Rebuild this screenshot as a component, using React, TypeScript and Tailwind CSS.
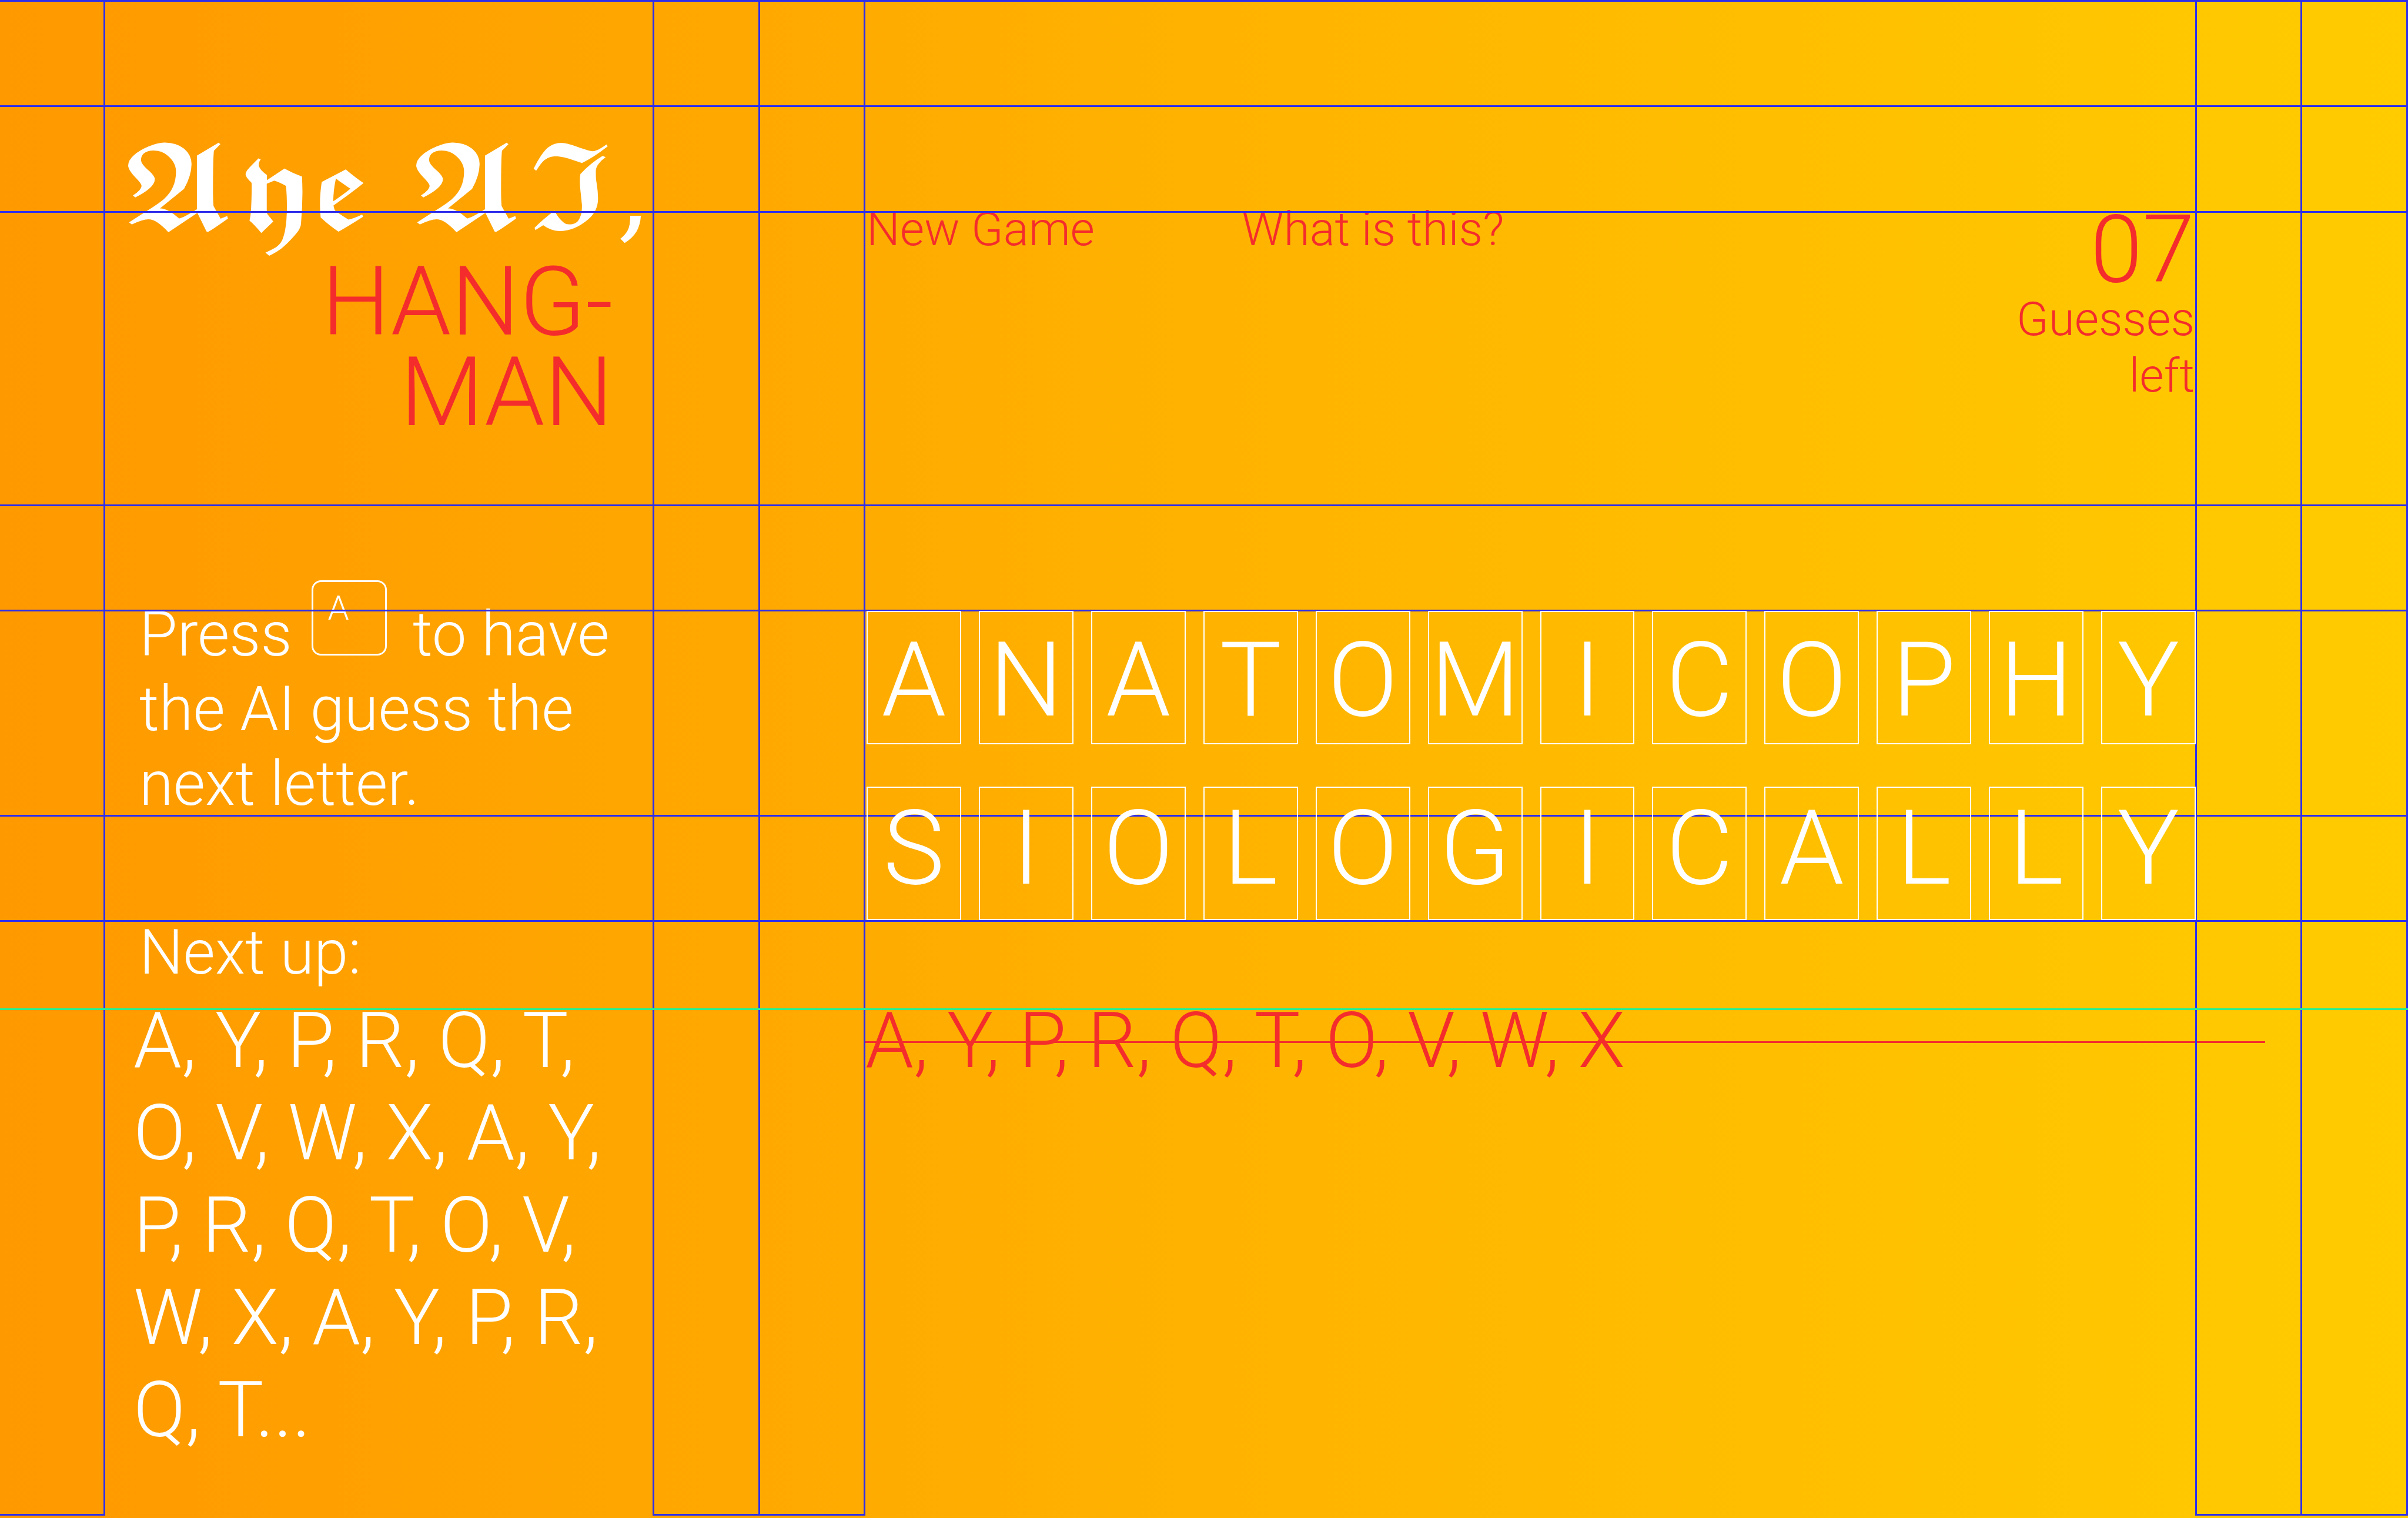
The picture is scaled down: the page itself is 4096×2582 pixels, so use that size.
const WORD_ROWS = ["ANATOMICOPHY", "SIOLOGICALLY"];
const WRONG_GUESSES = "A, Y, P, R, Q, T, O, V, W, X";
const UPCOMING = "A, Y, P, R, Q, T, O, V, W, X, A, Y, P, R, Q, T, O, V, W, X, A, Y, P, R, Q, T...";

function LayoutGuides() {
  return (
    <div aria-hidden="true" className="pointer-events-none absolute inset-0 z-10">
      <div className="absolute inset-x-0 top-0 bottom-1 grid grid-cols-[179fr_934fr_180fr_179fr_2265fr_179fr_180fr] border-t-3 border-[#2e2eea]">
        <div className="border-r-3 border-b-3 border-[#2e2eea]" />
        <div className="border-r-3 border-[#2e2eea]" />
        <div className="border-r-3 border-b-3 border-[#2e2eea]" />
        <div className="border-r-3 border-b-3 border-[#2e2eea]" />
        <div className="border-r-3 border-[#2e2eea]" />
        <div className="border-r-3 border-b-3 border-[#2e2eea]" />
        <div className="border-r-3 border-b-3 border-[#2e2eea]" />
      </div>
      <div className="absolute inset-0 grid grid-rows-[182fr_180fr_499fr_179fr_349fr_179fr_150fr_864fr]">
        <div className="border-b-3 border-[#2e2eea]" />
        <div className="border-b-3 border-[#2e2eea]" />
        <div className="border-b-3 border-[#2e2eea]" />
        <div className="border-b-3 border-[#2e2eea]" />
        <div className="border-b-3 border-[#2e2eea]" />
        <div className="border-b-3 border-[#2e2eea]" />
        <div className="border-b-3 border-[#2dee8c]" />
      </div>
    </div>
  );
}

function Sidebar() {
  return (
    <aside className="col-start-2 pt-[230px] pr-[70px] pl-12 text-white">
      <h1>
        <span
          aria-label="Aye AI,"
          className="-ml-6 block font-['DejaVu_Math_TeX_Gyre',serif] text-[188px] leading-[206px] whitespace-nowrap"
        >
          𝕬𝖞𝖊 𝕬𝕴,
        </span>
        <span className="block text-right text-[164px] leading-[154px] text-[#f42c2c]">
          HANG-
          <br />
          MAN
        </span>
      </h1>
      <p className="mt-[243px] pl-[10px] text-[105px] leading-[127px]">
        Press{" "}
        <kbd className="mr-[18px] ml-2 inline-block size-32 overflow-hidden rounded-2xl border-3 border-white pt-2 pl-6 font-['Roboto',sans-serif] text-[58px] leading-[72px]">
          A
        </kbd>{" "}
        to have the AI guess the next letter.
      </p>
      <h2 className="mt-[160px] pl-[10px] text-[105px] leading-[127px]">Next up:</h2>
      <p className="mt-2 text-[131px] leading-[157px]">{UPCOMING}</p>
    </aside>
  );
}

function Header() {
  return (
    <header className="flex items-start justify-between px-[2px] text-[80px] leading-[96px] text-[#f42c2c]">
      <nav className="flex gap-[250px]">
        <button type="button">New Game</button>
        <button type="button">What is this?</button>
      </nav>
      <p className="mt-[13px] flex w-[320px] flex-col pr-[2px] text-right">
        <span className="text-[160px] leading-[140px]">07</span>
        <span>
          Guesses
          <br />
          left
        </span>
      </p>
    </header>
  );
}

function WordBoard() {
  return (
    <section aria-label="Word" className="relative z-20 mt-[352px] flex flex-col gap-[72px] px-[2px] text-white">
      {WORD_ROWS.map((row, rowIndex) => (
        <div key={row} className="grid grid-cols-12 gap-[30px]">
          {row.split("").map((letter, i) => (
            <div
              key={i}
              className={
                rowIndex === 0
                  ? "flex h-[227px] items-center justify-center border-2 border-white pt-2 text-[176px] leading-none"
                  : "flex h-[227px] items-center justify-center border-2 border-white pb-[18px] text-[176px] leading-none"
              }
            >
              {letter}
            </div>
          ))}
        </div>
      ))}
    </section>
  );
}

export default function App() {
  return (
    <div className="relative grid min-h-screen grid-cols-[minmax(0,179fr)_minmax(0,934fr)_minmax(0,180fr)_minmax(0,179fr)_minmax(0,2265fr)_minmax(0,179fr)_minmax(0,180fr)] bg-linear-to-r/srgb from-[#ff9900] to-[#ffcc00] font-['Roboto',sans-serif] font-light">
      <LayoutGuides />
      <Sidebar />
      <main className="col-start-5 pt-[342px]">
        <Header />
        <WordBoard />
        <p className="relative mt-[127px] text-[131px] leading-[157px] text-[#f42c2c]">
          <s className="no-underline">{WRONG_GUESSES}</s>
          <span aria-hidden="true" className="absolute top-[79px] -right-[116px] left-0 h-[3px] bg-[#f42c2c]" />
        </p>
      </main>
    </div>
  );
}
